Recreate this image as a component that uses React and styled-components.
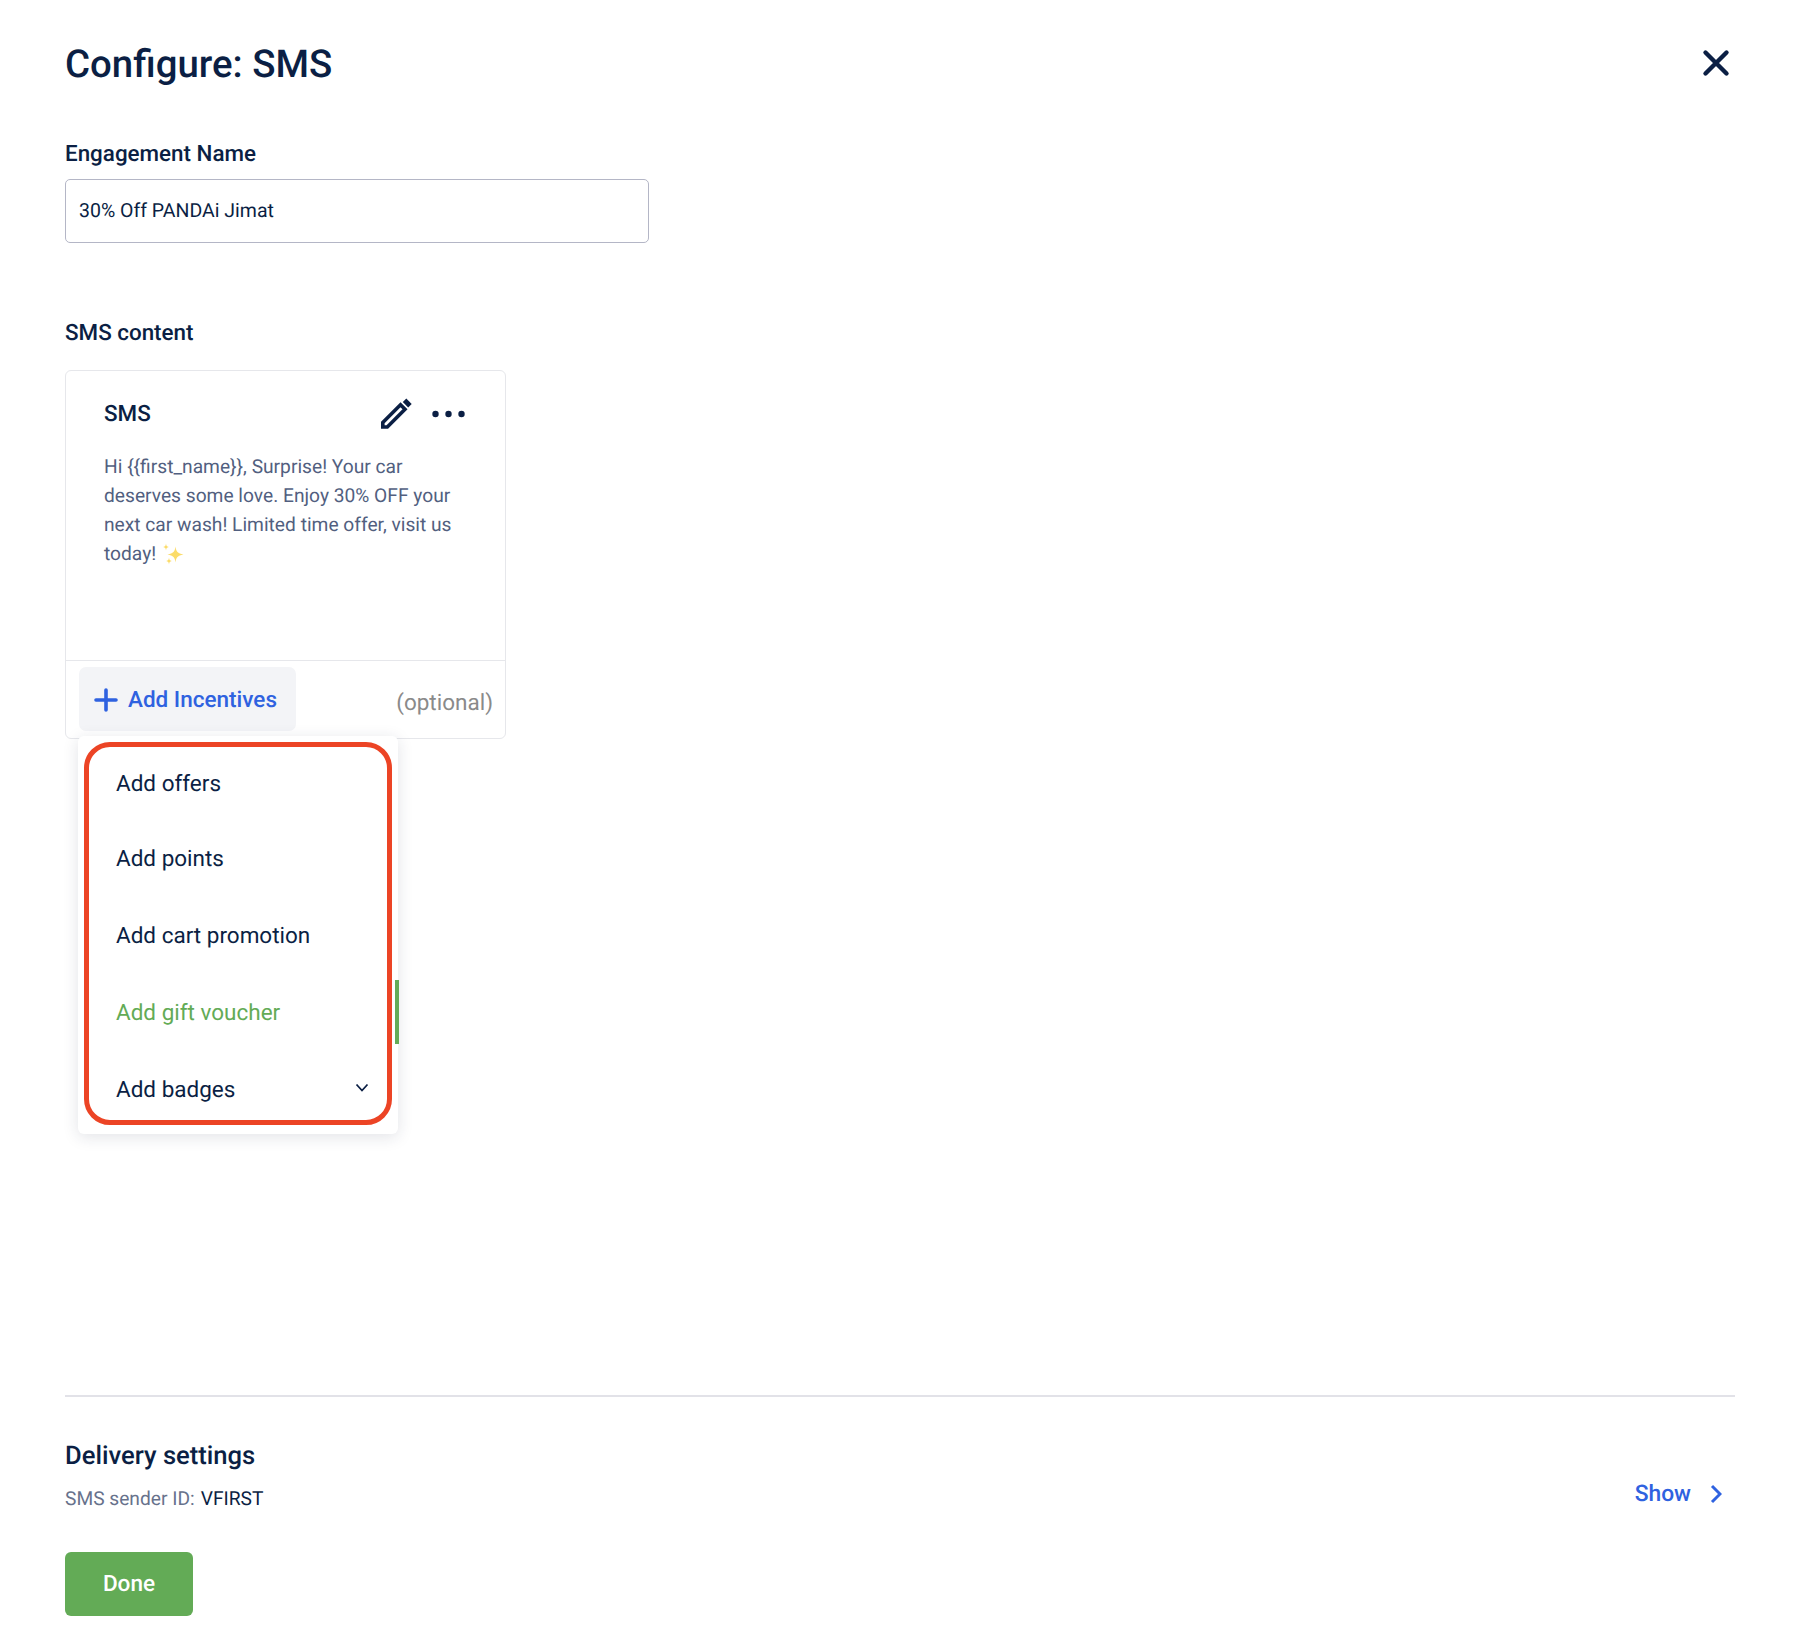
import React from 'react';
import styled, { createGlobalStyle } from 'styled-components';

const Global = createGlobalStyle`
  html, body { margin: 0; padding: 0; background: #fff; }
  body { font-family: Roboto, "Liberation Sans", sans-serif; color: #0b1f44; text-rendering: geometricPrecision; }
  * { box-sizing: border-box; }
`;

const Page = styled.div`
  width: 1804px; height: 1642px; padding: 0 69px 26px 65px;
  display: flex; flex-direction: column; background: #fff;
`;
const Header = styled.header`
  height: 141px; padding-top: 43px; display: flex; align-items: flex-start; justify-content: space-between;
`;
const Title = styled.h1`
  margin: 0; font-size: 38.4px; font-weight: 500; line-height: 44px; color: #0b1f44;
`;
const CloseBtn = styled.button`
  border: 0; background: none; padding: 0; margin: 5px 4px 0 0; width: 30px; height: 30px; display: flex; color: #0b1f44;
`;
const FieldLabel = styled.label`
  display: block; font-size: 22.4px; font-weight: 500; line-height: 26px; color: #0b1f44;
`;
const TextInput = styled.div`
  width: 584px; height: 64px; margin-top: 12px; padding: 0 13px 1px; display: flex; align-items: center;
  border: 1px solid #b4b6c6; border-radius: 5px; font-size: 19.5px; color: #0b1f44;
`;
const SectionLabel = styled(FieldLabel)`
  margin-top: 77px;
`;
const CardWrap = styled.div`
  position: relative; width: 441px; margin-top: 24px;
`;
const Card = styled.section`
  height: 369px; border: 1px solid #e6e7eb; border-radius: 6px; display: flex; flex-direction: column;
`;
const CardBody = styled.div`
  flex: 1; padding: 23px 40px 0 38px;
`;
const CardHead = styled.div`
  display: flex; align-items: center; justify-content: space-between; height: 40px;
`;
const CardTitle = styled.div`
  font-size: 22.4px; font-weight: 500; color: #0b1f44;
`;
const CardActions = styled.div`
  display: flex; align-items: center; gap: 20px; color: #0b1f44;
`;
const Message = styled.p`
  margin: 18px 0 0; font-size: 19.2px; line-height: 29px; color: #525f7f; white-space: nowrap;
`;
const Sparkle = styled.svg`
  width: 25px; height: 25px; vertical-align: -7px; margin-left: 0;
`;
const CardFoot = styled.div`
  height: 78px; border-top: 1px solid #e6e7eb; display: flex; align-items: flex-start;
  justify-content: space-between; padding: 6px 12px 0 13px;
`;
const IncentiveBtn = styled.button`
  width: 217px; height: 64px; border: 0; border-radius: 7px; background: #f3f4f7; color: #2f62e0;
  display: flex; align-items: center; gap: 10px; padding: 1px 0 0 15px;
  font: 500 22.5px Roboto, sans-serif; text-rendering: geometricPrecision;
`;
const Optional = styled.span`
  font-size: 22.5px; color: #8a8a8a; margin-top: 23px; line-height: 27px;
`;
const Menu = styled.div`
  position: absolute; left: 13px; top: 366px; width: 320px; height: 398px; background: #fff;
  border-radius: 6px; box-shadow: 0 3px 16px rgba(30, 40, 70, 0.13);
  padding: 6px 6px 9px 6px; z-index: 2;
`;
const MenuFrame = styled.div`
  height: 100%; border: 5px solid #ec4425; border-radius: 26px; overflow: hidden;
  display: flex; flex-direction: column;
`;
const MenuItem = styled.div`
  flex: none; height: 77px; display: flex; align-items: center; justify-content: space-between; padding: 0 18px 0 27px;
  font-size: 22.5px; color: ${p => (p.$active ? '#63ab56' : '#0b1f44')};
  &:first-child { height: 73px; }
`;
const ChevronSlot = styled.span`
  display: flex; margin-top: -4px;
`;
const ScrollThumb = styled.div`
  position: absolute; right: -1px; top: 244px; width: 4px; height: 64px; background: #63ab56;
`;
const Footer = styled.footer`
  margin-top: auto; border-top: 2px solid #e2e2e8;
`;
const DeliveryRow = styled.div`
  display: flex; align-items: flex-end; justify-content: space-between; margin-top: 42px;
`;
const DeliveryTitle = styled.h2`
  margin: 0; font-size: 25.6px; font-weight: 500; line-height: 34px; color: #0b1f44;
`;
const SenderLine = styled.div`
  margin-top: 14px; font-size: 19.2px; line-height: 24px; color: #67728c;
  b { font-weight: 400; color: #0b1f44; margin-left: 6px; }
`;
const ShowLink = styled.a`
  display: flex; align-items: center; gap: 19px; color: #2f62e0; font-size: 22.8px; font-weight: 500;
  margin: 0 13px 4px 0;
`;
const DoneBtn = styled.button`
  display: block; margin-top: 41px; width: 128px; height: 64px; border: 0; border-radius: 6px; background: #63ab56;
  color: #fff; font: 500 22.6px Roboto, sans-serif; padding: 0 0 2px; text-rendering: geometricPrecision;
`;

const Close = () => (
  <svg width="30" height="30" viewBox="0 0 30 30" fill="none" stroke="currentColor" strokeWidth="4.4" strokeLinecap="round">
    <path d="M4.5 4.500 25.500 25.500M25.500 4.500 4.500 25.500" />
  </svg>
);
const Pencil = () => (
  <svg width="32" height="32" viewBox="0 0 32 32">
    <path fill="none" stroke="currentColor" strokeWidth="3.6" strokeLinejoin="miter" d="M2.800 24.500 20.500 6.800 25 11.300 7.300 29H2.800Z" />
    <path fill="currentColor" d="M22.800 4 26.300 .5 31.700 5.900 28.200 9.400Z" />
  </svg>
);
const Dots = () => (
  <svg width="33" height="8" viewBox="0 0 33 8" fill="currentColor">
    <circle cx="3.500" cy="4" r="3.200" /><circle cx="16.500" cy="4" r="3.200" /><circle cx="29.500" cy="4" r="3.200" />
  </svg>
);
const Plus = () => (
  <svg width="24" height="24" viewBox="0 0 24 24" fill="none" stroke="currentColor" strokeWidth="3.600" strokeLinecap="round">
    <path d="M12 2V22M2 12H22" />
  </svg>
);
const ChevronDown = () => (
  <svg width="14" height="10" viewBox="0 0 14 10" fill="none" stroke="#0b1f44" strokeWidth="1.800">
    <path d="M1.500 1.500 7 7.500 12.500 1.500" />
  </svg>
);
const ChevronRight = () => (
  <svg width="12" height="20" viewBox="0 0 12 20" fill="none" stroke="currentColor" strokeWidth="3">
    <path d="M2 2 10 10 2 18" />
  </svg>
);

export default function App() {
  return (
    <Page>
      <Global />
      <Header>
        <Title>Configure: SMS</Title>
        <CloseBtn><Close /></CloseBtn>
      </Header>
      <FieldLabel>Engagement Name</FieldLabel>
      <TextInput>30% Off PANDAi Jimat</TextInput>
      <SectionLabel>SMS content</SectionLabel>
      <CardWrap>
        <Card>
          <CardBody>
            <CardHead>
              <CardTitle>SMS</CardTitle>
              <CardActions><Pencil /><Dots /></CardActions>
            </CardHead>
            <Message>
              Hi {'{{first_name}}'}, Surprise! Your car<br />
              deserves some love. Enjoy 30% OFF your<br />
              next car wash! Limited time offer, visit us<br />
              today!{' '}
              <Sparkle viewBox="0 0 25 25">
                <path fill="#fbdc6a" d="M14.500 4.500c.7 5 2 6.700 8 8-6 1.300-7.300 3-8 8-.7-5-2-6.700-8-8 6-1.300 7.300-3 8-8Z" />
                <path fill="#fbdc6a" d="M5 1.500c.3 2.400.8 3 2.800 3.500-2 .5-2.500 1.100-2.800 3.500C4.700 6.100 4.200 5.500 2.200 5c2-.5 2.500-1.100 2.800-3.500ZM8 15.500c.3 2.400.8 3 2.800 3.500-2 .5-2.500 1.100-2.800 3.500-.3-2.400-.8-3-2.800-3.500 2-.5 2.500-1.100 2.800-3.500Z" />
              </Sparkle>
            </Message>
          </CardBody>
          <CardFoot>
            <IncentiveBtn><Plus />Add Incentives</IncentiveBtn>
            <Optional>(optional)</Optional>
          </CardFoot>
        </Card>
        <Menu>
          <MenuFrame>
            <MenuItem>Add offers</MenuItem>
            <MenuItem>Add points</MenuItem>
            <MenuItem>Add cart promotion</MenuItem>
            <MenuItem $active>Add gift voucher</MenuItem>
            <MenuItem>Add badges<ChevronSlot><ChevronDown /></ChevronSlot></MenuItem>
          </MenuFrame>
          <ScrollThumb />
        </Menu>
      </CardWrap>
      <Footer>
        <DeliveryRow>
          <div>
            <DeliveryTitle>Delivery settings</DeliveryTitle>
            <SenderLine>SMS sender ID:<b>VFIRST</b></SenderLine>
          </div>
          <ShowLink>Show<ChevronRight /></ShowLink>
        </DeliveryRow>
        <DoneBtn>Done</DoneBtn>
      </Footer>
    </Page>
  );
}
